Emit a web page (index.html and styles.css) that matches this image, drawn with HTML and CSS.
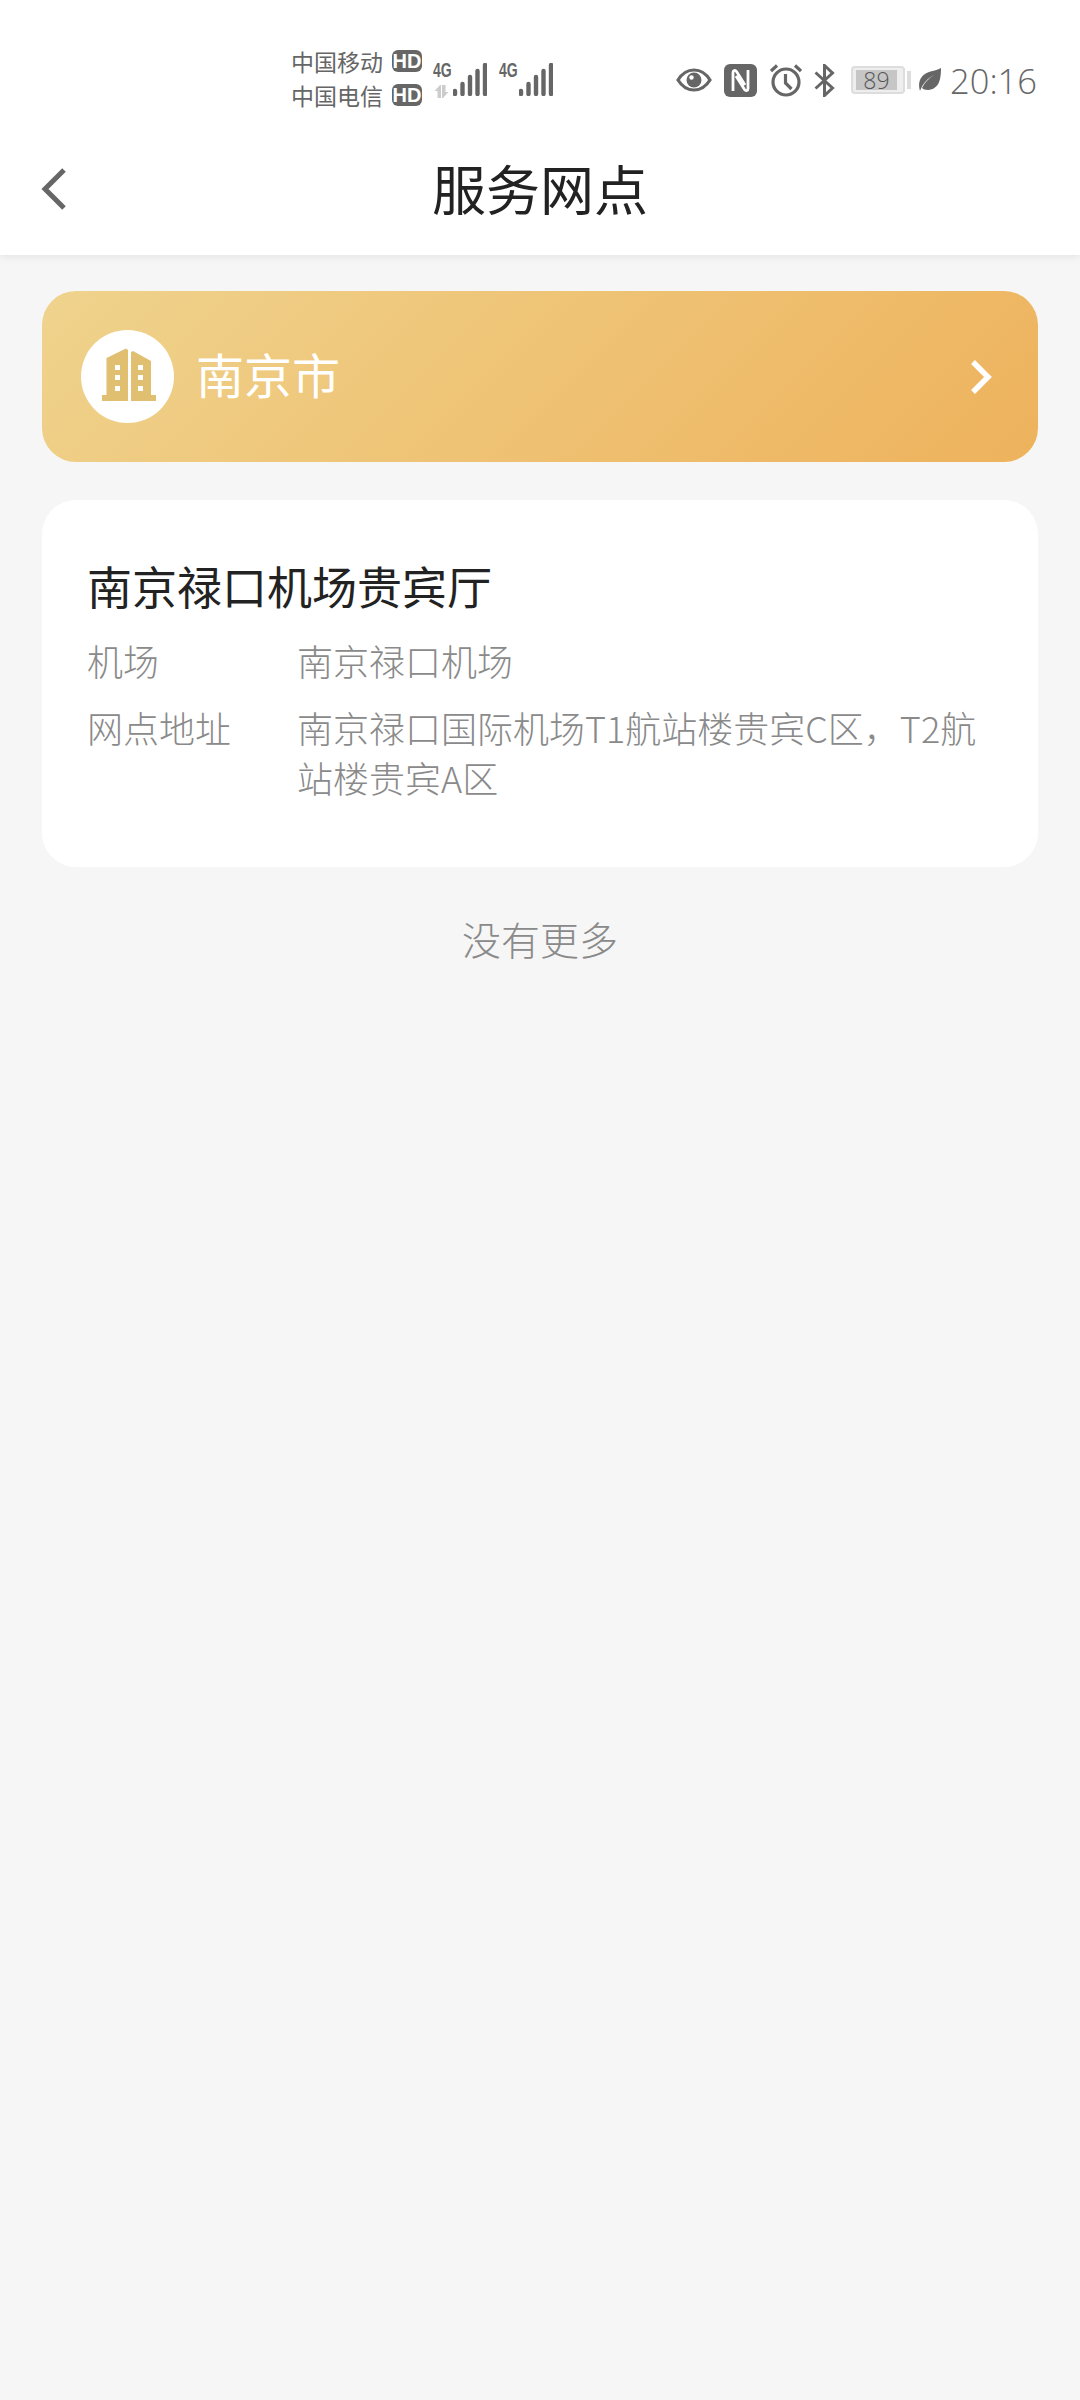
FILE: index.html
```html
<!DOCTYPE html>
<html lang="zh-CN">
<head>
    <meta charset="UTF-8">
    <meta name="viewport" content="width=device-width, initial-scale=1.0">
    <title>服务网点</title>
    <link rel="stylesheet" href="styles.css">
</head>
<body>
    <div class="header">
        <div class="status-bar">
            <div class="carriers">
                <div class="carrier"><span>中国移动</span><b class="hd">HD</b></div>
                <div class="carrier"><span>中国电信</span><b class="hd">HD</b></div>
            </div>
            <div class="signal">
                <span class="net">4G</span>
                <svg class="arrows" width="16" height="13" viewBox="0 0 16 13"><path d="M6 0L0.500 6H3.500v7H7V0ZM9 13l5.500-6H11.500V0H8v13Z" fill="#ccc"/></svg>
                <svg class="bars" width="34" height="33" viewBox="0 0 34 33"><path d="M2 28v3M9.500 21v10M17 14v17M24.500 8v23M32 2v29" fill="none" stroke="#666" stroke-width="4.400" stroke-linecap="round"/></svg>
            </div>
            <div class="signal second">
                <span class="net">4G</span>
                <svg class="bars" width="34" height="33" viewBox="0 0 34 33"><path d="M2 28v3M9.500 21v10M17 14v17M24.500 8v23M32 2v29" fill="none" stroke="#666" stroke-width="4.400" stroke-linecap="round"/></svg>
            </div>
            <div class="status-right">
                <svg class="eye" width="36" height="24" viewBox="0 0 36 24"><path d="M2 12C6 5.500 12 2 18 2S30 5.500 34 12C30 18.500 24 22 18 22S6 18.500 2 12Z" fill="none" stroke="#666" stroke-width="3.200"/><circle cx="18" cy="12" r="7.500" fill="#666"/><circle cx="15.500" cy="9.500" r="2.200" fill="#fff"/></svg>
                <svg class="nfc" width="33" height="33" viewBox="0 0 33 33"><rect width="33" height="33" rx="6" fill="#666"/><path d="M9 27V8.500C9 6.500 11 5.500 12.500 7.500L21 21M24 6v18.500C24 26.500 22 27.500 20.500 25.500L12 12" fill="none" stroke="#fff" stroke-width="2.800"/></svg>
                <svg class="alarm" width="32" height="33" viewBox="0 0 32 33"><circle cx="16" cy="18" r="13" fill="none" stroke="#666" stroke-width="3.200"/><path d="M15.500 10v9l6 6M1 7l6-5.500M31 7l-6-5.500" fill="none" stroke="#666" stroke-width="3.200"/></svg>
                <svg class="bluetooth" width="21" height="33" viewBox="0 0 21 33"><path d="M1.500 8.500L18.500 24l-8 7.500V1.500l8 7.500L1.500 24.500" fill="none" stroke="#666" stroke-width="3"/></svg>
                <div class="battery"><div class="level">89</div></div>
                <div class="battery-tip"></div>
                <svg class="leaf" width="22" height="24" viewBox="0 0 22 24"><path d="M22 0C22 12 20 21 9 22 6 22 4 21 3 20 6 14 10 10 15 7 9 10 4 15 1 23 -1 17 0 10 6 6 10 3 17 3 22 0Z" fill="#666"/></svg>
                <span class="time">20:16</span>
            </div>
        </div>
        <div class="title-bar">
            <svg class="back" width="26" height="42" viewBox="0 0 26 42"><path d="M23 2L4 21l19 19" fill="none" stroke="#666" stroke-width="5"/></svg>
            <h1>服务网点</h1>
        </div>
    </div>

    <div class="content">
        <div class="city-card">
            <div class="city-icon">
                <svg width="54" height="54" viewBox="0 0 54 54"><path d="M0 53v-6h4.500V10L24 0.500 26 2v51ZM54 53v-6h-5V13L31 3 29 4v49Z" fill="#e0c070"/><path d="M13 17h5v5h-5zM13 27h5v5h-5zM13 38h5v5h-5zM36 17h5v5h-5zM36 27h5v5h-5zM36 38h5v5h-5z" fill="#fff"/></svg>
            </div>
            <span class="city-name">南京市</span>
            <svg class="city-arrow" width="24" height="36" viewBox="0 0 24 36"><path d="M3 3l15 15L3 33" fill="none" stroke="#fff" stroke-width="5.500"/></svg>
        </div>

        <div class="point-card">
            <h2>南京禄口机场贵宾厅</h2>
            <div class="row">
                <div class="label">机场</div>
                <div class="value">南京禄口机场</div>
            </div>
            <div class="row">
                <div class="label">网点地址</div>
                <div class="value">南京禄口国际机场T1航站楼贵宾C区，T2航站楼贵宾A区</div>
            </div>
        </div>

        <div class="no-more">没有更多</div>
    </div>
</body>
</html>
```

FILE: styles.css
```css
body {
    margin: 0;
    height: 2400px;
    background: #f6f6f6;
    font-family: "Noto Sans CJK SC", "Noto Sans", sans-serif;
    overflow: hidden;
}
.header {
    height: 255px;
    background: #fff;
    box-shadow: 0 2px 8px rgba(0, 0, 0, 0.08);
}
.status-bar {
    height: 130px;
    display: flex;
    align-items: flex-start;
    padding-left: 291px;
    padding-right: 43px;
    box-sizing: border-box;
    color: #666;
}
.carriers {
    padding-top: 46px;
    width: 131px;
    flex-shrink: 0;
    margin-top: -2px;
}
.carrier {
    height: 34px;
    display: flex;
    align-items: center;
    font-size: 23px;
    line-height: 34px;
}
.hd {
    margin-left: 9px;
    background: #666;
    color: #fff;
    border-radius: 6px;
    width: 30px;
    height: 22px;
    line-height: 22px;
    font-family: "Liberation Sans", sans-serif;
    font-size: 20px;
    text-align: center;
}
.signal {
    position: relative;
    flex-shrink: 0;
    width: 54px;
    height: 34px;
    margin-left: 11px;
    margin-top: 63px;
}
.signal.second {
    margin-left: 12px;
}
.net {
    position: absolute;
    left: 0;
    top: 0;
    font-family: "Liberation Sans", sans-serif;
    font-weight: bold;
    font-size: 20px;
    line-height: 14px;
    transform: scaleX(0.7);
    transform-origin: left;
}
.arrows {
    position: absolute;
    left: 1px;
    top: 22px;
}
.bars {
    position: absolute;
    right: 0;
    top: 0;
}
.status-right {
    margin-left: auto;
    margin-top: 62px;
    height: 36px;
    display: flex;
    align-items: center;
}
.nfc {
    margin-left: 12px;
}
.alarm {
    margin-left: 13px;
}
.bluetooth {
    margin-left: 12px;
}
.battery {
    width: 54px;
    height: 28px;
    box-sizing: border-box;
    border: 2px solid #ddd;
    border-radius: 4px;
    background: #eee;
    padding: 2px;
    margin-left: 16px;
}
.level {
    width: 41px;
    height: 20px;
    margin-left: 1px;
    background: #c6c6c6;
    font-family: "Open Sans", sans-serif;
    font-weight: 300;
    font-size: 23px;
    line-height: 20px;
    text-align: center;
    color: #555;
}
.battery-tip {
    width: 4px;
    height: 18px;
    background: #ddd;
    margin-left: 2px;
}
.leaf {
    margin-left: 8px;
}
.time {
    font-family: "Open Sans", sans-serif;
    font-weight: 300;
    font-size: 34.500px;
    margin-left: 9px;
    color: #666;
}
.title-bar {
    position: relative;
    height: 125px;
    display: flex;
    align-items: center;
    justify-content: center;
}
.title-bar h1 {
    margin: 0 0 10px;
    font-size: 54px;
    font-weight: 400;
    color: #222;
}
.back {
    position: absolute;
    left: 41px;
    top: 38px;
}
.content {
    padding: 36px 42px 0;
}
.city-card {
    height: 171px;
    display: flex;
    align-items: center;
    padding: 0 44px 0 39px;
    border-radius: 34px;
    background: linear-gradient(135deg, #efd38d, #eeb25c);
}
.city-icon {
    width: 93px;
    height: 93px;
    border-radius: 50%;
    background: #fff;
    display: flex;
    align-items: center;
    justify-content: center;
}
.city-icon svg {
    margin: 0 0 3px 3px;
}
.city-name {
    margin: 0 0 8px 22px;
    font-size: 48px;
    color: #fff;
}
.city-arrow {
    margin-left: auto;
}
.point-card {
    margin-top: 38px;
    height: 367px;
    box-sizing: border-box;
    padding: 55px 45px 0;
    border-radius: 34px;
    background: #fff;
}
.point-card h2 {
    margin: 0 0 18px;
    font-size: 45px;
    line-height: 62px;
    font-weight: 400;
    color: #222;
}
.row {
    display: flex;
    font-size: 36px;
    font-weight: 300;
    line-height: 50px;
    color: #8a8a8a;
    margin-bottom: 17px;
}
.label {
    width: 210px;
    flex-shrink: 0;
}
.no-more {
    margin-top: 45px;
    text-align: center;
    font-size: 39px;
    font-weight: 300;
    line-height: 52px;
    color: #8a8a8a;
}
```
